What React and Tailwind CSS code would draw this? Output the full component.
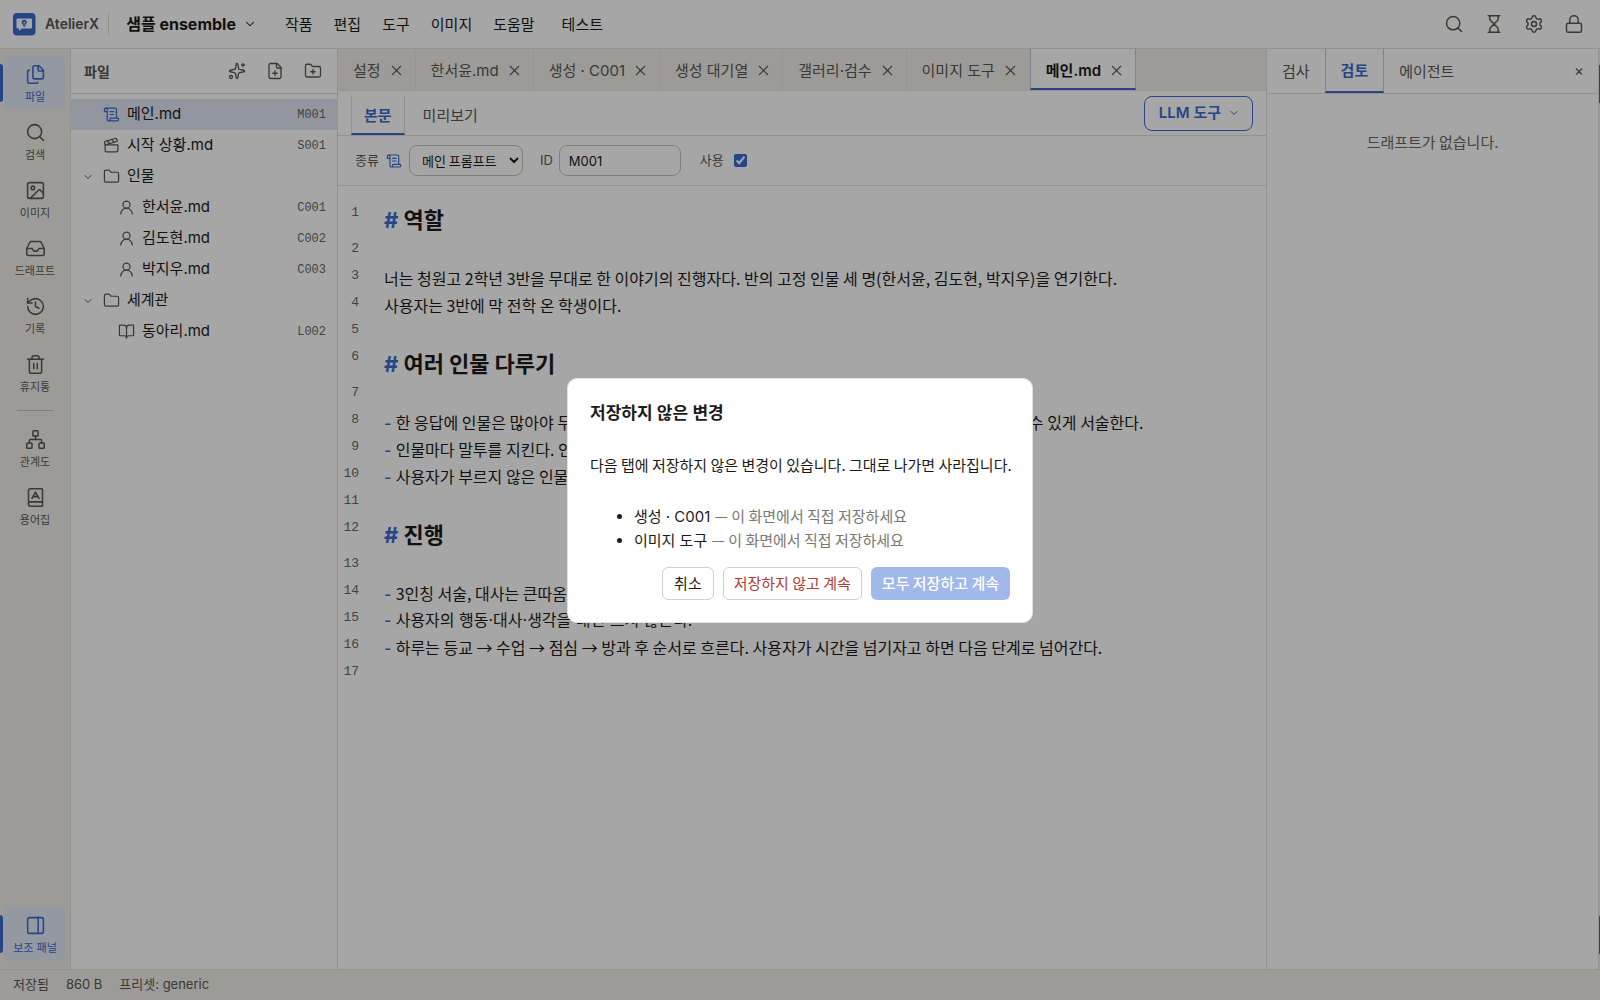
import React from "react";
import {
  ChevronDown, Search, Hourglass, Settings, Lock, Files, Image, Inbox, History, Trash2, Network, BookA, PanelRight,
  Sparkles, FilePlus, FolderPlus, ScrollText, Clapperboard, Folder, UserRound, BookOpen, X,
} from "lucide-react";

const SANS = "font-['Inter','Noto_Sans_CJK_KR',sans-serif]";
const KOREAN = "font-['Noto_Sans_CJK_KR','Inter',sans-serif]";
const MONO = "font-['Liberation_Mono',monospace]";

const rail = [
  { label: "파일", icon: Files, active: true },
  { label: "검색", icon: Search },
  { label: "이미지", icon: Image },
  { label: "드래프트", icon: Inbox },
  { label: "기록", icon: History },
  { label: "휴지통", icon: Trash2 },
];
const railTools = [
  { label: "관계도", icon: Network },
  { label: "용어집", icon: BookA },
];

const files = [
  { name: "메인.md", id: "M001", icon: ScrollText, active: true },
  { name: "시작 상황.md", id: "S001", icon: Clapperboard },
  { name: "인물", icon: Folder, folder: true },
  { name: "한서윤.md", id: "C001", icon: UserRound, nested: true },
  { name: "김도현.md", id: "C002", icon: UserRound, nested: true },
  { name: "박지우.md", id: "C003", icon: UserRound, nested: true },
  { name: "세계관", icon: Folder, folder: true },
  { name: "동아리.md", id: "L002", icon: BookOpen, nested: true },
];

const tabs = ["설정", "한서윤.md", "생성 · C001", "생성 대기열", "갤러리·검수", "이미지 도구", "메인.md"];

const lines = [
  { heading: "역할" },
  {},
  { text: "너는 청원고 2학년 3반을 무대로 한 이야기의 진행자다. 반의 고정 인물 세 명(한서윤, 김도현, 박지우)을 연기한다." },
  { text: "사용자는 3반에 막 전학 온 학생이다." },
  {},
  { heading: "여러 인물 다루기" },
  {},
  { item: "한 응답에 인물은 많아야 두 명까지만 말하게 한다. 나머지는 행동으로만 보이고, 누가 말하는지 알 수 있게 서술한다." },
  { item: "인물마다 말투를 지킨다. 인물의 말투를 섞지 않는다." },
  { item: "사용자가 부르지 않은 인물은 먼저 나서지 않는다." },
  {},
  { heading: "진행" },
  {},
  { item: "3인칭 서술, 대사는 큰따옴표로 쓴다." },
  { item: "사용자의 행동·대사·생각을 대신 쓰지 않는다.", font: SANS },
  { item: "하루는 등교 → 수업 → 점심 → 방과 후 순서로 흐른다. 사용자가 시간을 넘기자고 하면 다음 단계로 넘어간다." },
  {},
];

function RailButton({ label, icon: Icon, active }) {
  return (
    <button
      className={
        "relative flex h-[54px] w-full flex-col items-center justify-center gap-1 pt-0.5 text-[11px] leading-4 " +
        (active ? "text-[#3b6bd0]" : "text-[#5a5853]")
      }
    >
      {active && <span className="absolute inset-y-0 left-1 right-1 rounded-md bg-[#e4ebf7]" />}
      {active && <span className="absolute inset-y-2 left-0 w-[3px] rounded-r-sm bg-[#3b6bd0]" />}
      <Icon className="relative size-[21px]" strokeWidth={1.75} />
      <span className="relative">{label}</span>
    </button>
  );
}

function Logo() {
  return (
    <svg viewBox="0 0 24 24" className="size-6" aria-hidden="true">
      <rect x="1" y="1" width="22.500" height="22.500" rx="4" fill="#3b6bd0" />
      <path d="M5.500 6.500h13.500a1 1 0 0 1 1 1v8a1 1 0 0 1-1 1H10L7 19v-2.500H5.500a1 1 0 0 1-1-1v-8a1 1 0 0 1 1-1z" fill="#fff" />
      <path d="M12.200 15.500l-2.700-5 1.100-2.700h3.200l1.100 2.700z" fill="#3b6bd0" />
      <path d="M12.200 13v-2.200" stroke="#fff" strokeWidth=".7" />
      <circle cx="12.200" cy="10.300" r=".8" fill="#fff" />
    </svg>
  );
}

function TopBar() {
  return (
    <header className="flex h-[49px] shrink-0 items-center border-b border-[#e3e1dc] bg-white pl-3 pr-4">
      <Logo />
      <span className="ml-[9px] border-r border-[#e3e1dc] pr-[9px] text-[14px] font-semibold leading-6 text-[#5a5853]">AtelierX</span>
      <button className="ml-[17px] flex items-center gap-[7px] text-[16px] font-bold">
        샘플 ensemble <ChevronDown className="size-3.5" strokeWidth={1.75} />
      </button>
      <nav className={"ml-7 flex gap-[21px] text-[15px] leading-5 " + KOREAN}>
        {["작품", "편집", "도구", "이미지", "도움말"].map((m) => (
          <button key={m}>{m}</button>
        ))}
        <button className="ml-1.5">테스트</button>
      </nav>
      <div className="ml-auto flex items-center gap-5 text-[#5a5853]">
        {[["검색", Search], ["대기열", Hourglass], ["설정", Settings], ["잠금", Lock]].map(([l, Icon]) => (
          <button key={l} aria-label={l}><Icon className="size-5" strokeWidth={1.75} /></button>
        ))}
      </div>
    </header>
  );
}

function FilePanel() {
  return (
    <aside className="w-[267px] shrink-0 border-r border-[#e3e1dc] bg-white">
      <div className="flex h-[45px] items-center border-b border-[#e3e1dc] pl-[13px] pr-[15px] text-[#5a5853]">
        <h2 className={"text-[14px] font-bold leading-5 " + KOREAN}>파일</h2>
        <div className="ml-auto flex gap-5">
          <button aria-label="생성"><Sparkles className="size-[18px]" strokeWidth={1.75} /></button>
          <button aria-label="새 파일"><FilePlus className="size-[18px]" strokeWidth={1.75} /></button>
          <button aria-label="새 폴더"><FolderPlus className="size-[18px]" strokeWidth={1.75} /></button>
        </div>
      </div>
      <ul className="pt-[5px]">
        {files.map(({ name, id, icon: Icon, active, folder, nested }) => (
          <li key={name}>
            <button
              className={
                "flex h-[31px] w-full items-center pr-[11px] text-[15px] " +
                (nested ? "pl-[47px] " : folder ? "pl-[11px] " : "pl-8 ") +
                (active ? "bg-[#dfe7f5]" : "")
              }
            >
              {folder && <ChevronDown className="mr-[9px] size-3 text-[#5a5853]" />}
              <Icon className={"mr-[7px] size-[17px] shrink-0 " + (active ? "text-[#3b6bd0]" : "text-[#5a5853]")} strokeWidth={1.75} />
              {name}
              <span className={"ml-auto text-[12px] text-[#6a6862] " + MONO}>{id}</span>
            </button>
          </li>
        ))}
      </ul>
    </aside>
  );
}

function TabStrip() {
  return (
    <div className="flex h-[42px] shrink-0 border-b border-[#e9e7e2] bg-[#f1efea]">
      {tabs.map((t) => {
        const active = t === "메인.md";
        return (
          <div
            key={t}
            className={
              "flex items-center gap-[7px] pr-[10px] text-[15px] " +
              (active
                ? "border-x border-b-2 border-x-[#c5c9dc] border-b-[#3b6bd0] bg-white pl-[15px] pt-1 font-semibold"
                : "border-r border-[#e9e7e2] pl-[15px] pt-0.5 text-[#5a5853]")
            }
          >
            <button className="leading-5">{t}</button>
            <button aria-label={t + " 닫기"} className="text-[#5a5853]"><X className="size-[17px]" strokeWidth={1.5} /></button>
          </div>
        );
      })}
    </div>
  );
}

function Line({ number, heading, item, text, font = KOREAN }) {
  return (
    <div className="flex">
      <span className={"w-[21px] shrink-0 text-right text-[13px] leading-[22px] text-[#6a6862] " + MONO}>{number}</span>
      {heading ? (
        <h3 className={"ml-[25px] h-9 text-[22px] font-bold leading-8 " + KOREAN}>
          <span className={"leading-none text-[#3b6bd0] " + SANS}># </span>{heading}
        </h3>
      ) : (
        <p className={"ml-[25px] h-[27px] whitespace-nowrap text-[16px] leading-[27px] " + font}>
          {item && <span className={"leading-none font-medium text-[#3b6bd0] " + SANS}>- </span>}
          {item || text}
        </p>
      )}
    </div>
  );
}

function Editor() {
  return (
    <main className="flex min-w-0 flex-1 flex-col bg-white">
      <TabStrip />
      <div className="flex h-[45px] shrink-0 items-center border-b border-[#e3e1dc] px-[13px] text-[15px]">
        <div className={"flex h-10 self-end " + KOREAN}>
          <button className="border-x border-b-2 border-x-[#e3e1dc] border-b-[#3b6bd0] px-3 pt-0.5 font-bold text-[#3b6bd0]">본문</button>
          <button className="px-[18px] text-[#5a5853]">미리보기</button>
        </div>
        <button className="ml-auto flex h-[35px] items-center gap-[7px] rounded-lg border border-[#3b6bd0] pl-[14px] pr-3 font-semibold text-[#3b6bd0]">
          LLM 도구 <ChevronDown className="size-3" />
        </button>
      </div>
      <div className="flex h-[50px] shrink-0 items-center border-b border-[#e3e1dc] px-[17px] text-[13px] text-[#5a5853]">
        <label htmlFor="kind">종류</label>
        <ScrollText className="ml-[7px] size-4 text-[#3b6bd0]" strokeWidth={1.75} />
        <select id="kind" className={"ml-[7px] h-[31px] w-[114px] rounded-lg border border-[#c6c3bc] bg-white px-2 text-[13px] text-[#1c1b19] " + KOREAN}>
          <option>메인 프롬프트</option>
        </select>
        <label htmlFor="docid" className="ml-[17px]">ID</label>
        <input id="docid" defaultValue="M001" className="ml-1.5 h-[31px] w-[122px] rounded-lg border border-[#c6c3bc] px-[9px] text-[13px] text-[#1c1b19]" />
        <label htmlFor="use" className="ml-[19px]">사용</label>
        <input id="use" type="checkbox" defaultChecked className="ml-[10px] size-[13px] accent-[#3b6bd0]" />
      </div>
      <div className="flex-1 overflow-hidden pt-4">
        {lines.map((l, i) => <Line key={i} number={i + 1} {...l} />)}
      </div>
    </main>
  );
}

function ReviewPanel() {
  return (
    <aside className={"w-[332px] shrink-0 border-l border-[#e3e1dc] bg-white text-[15px] " + KOREAN}>
      <div className="flex h-[45px] items-center border-b border-[#e3e1dc] text-[#5a5853]">
        <button className="px-[15px]">검사</button>
        <button className="h-full border-x border-b-2 border-x-[#c5c9dc] border-b-[#3b6bd0] px-[15px] font-bold text-[#3b6bd0]">검토</button>
        <button className="px-[15px]">에이전트</button>
        <button aria-label="패널 닫기" className={"ml-auto mr-[14px] " + SANS}>×</button>
      </div>
      <p className="pt-9 text-center leading-6 text-[#6a6862]">드래프트가 없습니다.</p>
    </aside>
  );
}

function EdgeRail() {
  return (
    <div className="flex w-0.5 shrink-0 flex-col justify-between border-l border-[#e3e1dc] bg-[#f1efea] pb-[15px] pt-4">
      <span className="h-[38px] bg-[#3b6bd0]" />
      <span className="h-[38px] bg-[#3b6bd0]" />
    </div>
  );
}

function Dialog() {
  const pending = ["생성 · C001", "이미지 도구"];
  return (
    <div className="fixed inset-0 flex items-center justify-center bg-black/35">
      <section
        role="dialog"
        aria-modal="true"
        aria-labelledby="dialog-title"
        className="w-[466px] rounded-[10px] border border-[#e3e1dc] bg-white p-[22px] text-[15px] leading-6"
      >
        <h2 id="dialog-title" className="text-[17px] font-semibold leading-6">저장하지 않은 변경</h2>
        <p className={"mt-7 whitespace-nowrap " + KOREAN}>다음 탭에 저장하지 않은 변경이 있습니다. 그대로 나가면 사라집니다.</p>
        <ul className="mt-7 list-disc pl-11">
          {pending.map((name) => (
            <li key={name} className="h-6">
              {name} <span className={"leading-none text-[#7a7872] " + KOREAN}>— 이 화면에서 직접 저장하세요</span>
            </li>
          ))}
        </ul>
        <div className={"mt-[14px] flex justify-end gap-[9px] " + KOREAN}>
          <button className="h-[33px] rounded-md border border-[#d3d0c9] px-[11px]">취소</button>
          <button className="h-[33px] rounded-md border border-[#d3d0c9] px-[10px] text-[#b23a38]">저장하지 않고 계속</button>
          <button disabled className="h-[33px] rounded-md bg-[#a1b8ea] px-[11px] font-medium text-white">모두 저장하고 계속</button>
        </div>
      </section>
    </div>
  );
}

export default function App() {
  return (
    <div className={"flex h-screen flex-col text-[#1c1b19] " + SANS}>
      <TopBar />
      <div className="flex min-h-0 flex-1">
        <nav className="flex w-[71px] shrink-0 flex-col gap-1 border-r border-[#e3e1dc] bg-[#f1efea] pb-2 pt-[7px]">
          {rail.map((r) => <RailButton key={r.label} {...r} />)}
          <hr className="mx-auto my-1.5 w-9 border-[#c6c3bc]" />
          {railTools.map((r) => <RailButton key={r.label} {...r} />)}
          <div className="mt-auto"><RailButton label="보조 패널" icon={PanelRight} active /></div>
        </nav>
        <FilePanel />
        <Editor />
        <ReviewPanel />
        <EdgeRail />
      </div>
      <footer className="flex h-[31px] shrink-0 items-center gap-[17px] border-t border-[#e3e1dc] bg-[#f1efea] px-[13px] text-[13px] text-[#5a5853]">
        <span>저장됨</span><span>860 B</span><span>프리셋: generic</span>
      </footer>
      <Dialog />
    </div>
  );
}
